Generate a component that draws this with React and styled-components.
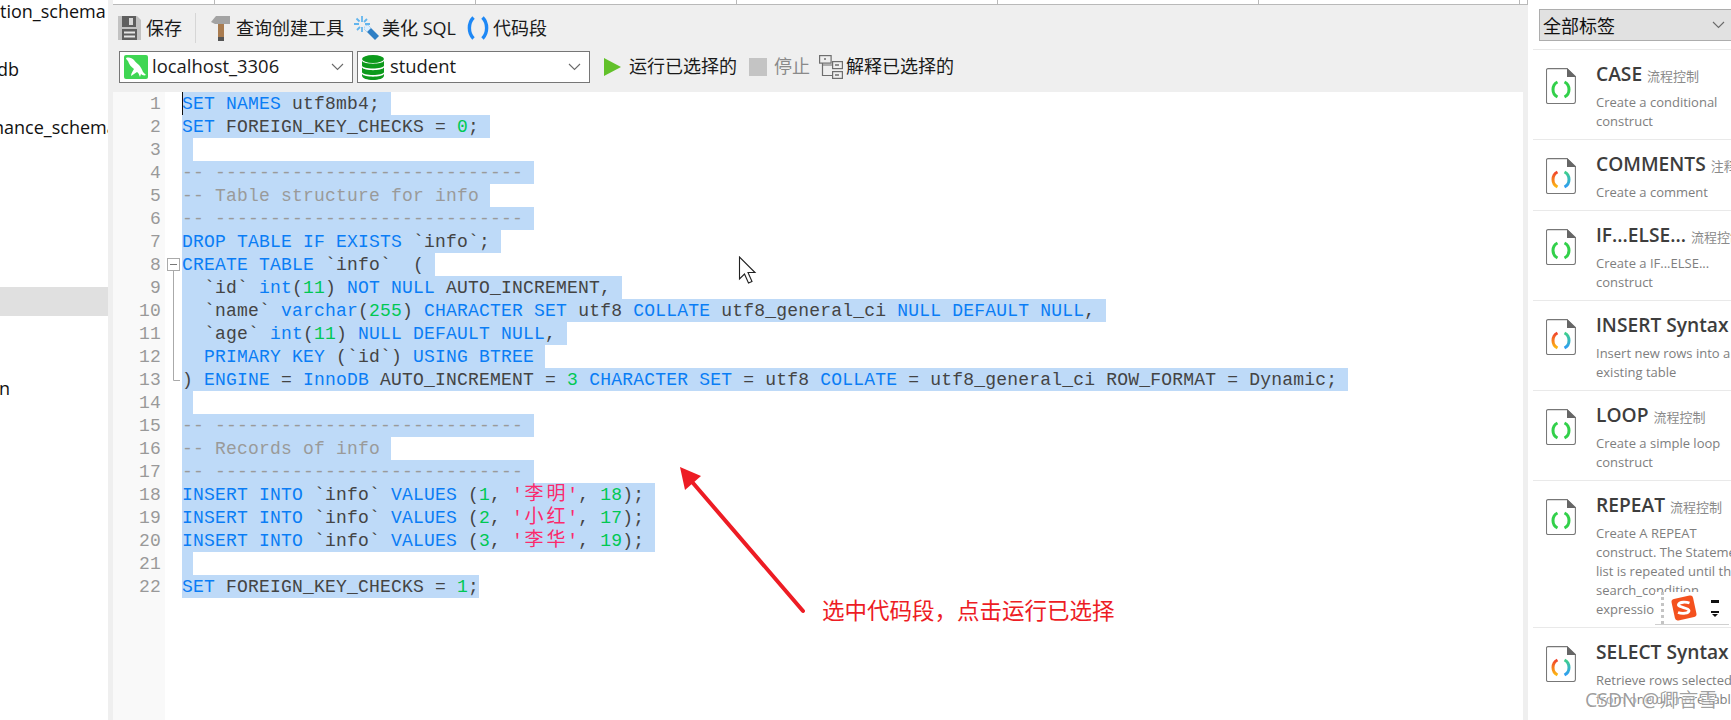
import React from 'react';
import styled, { createGlobalStyle } from 'styled-components';

const GlobalStyle = createGlobalStyle`
  html, body {
    margin: 0;
    padding: 0;
    background: #fff;
    overflow: hidden;
  }
`;

const uiFont = `"Open Sans", "Noto Sans CJK SC", sans-serif`;

const colors = {
  panel: '#efefef',
  selection: '#bedaf8',
  keyword: '#0a7df5',
  number: '#00c853',
  string: '#fb2a6c',
  comment: '#9a9a9a',
  text: '#444',
  red: '#ed1c24',
};

const Page = styled.div`
  position: relative;
  display: flex;
  width: 1731px;
  height: 720px;
  overflow: hidden;
  font-family: ${uiFont};
`;

/* left tree */
const Sidebar = styled.div`
  flex: 0 0 108px;
  overflow: hidden;
  margin-top: -3px;
`;

const TreeRow = styled.div`
  height: 29px;
  line-height: 29px;
  font-size: 18px;
  color: #111;
  white-space: nowrap;
  overflow: hidden;
  text-indent: ${(p) => p.$indent ?? 0}px;
  background: ${(p) => (p.$active ? '#e0e0e0' : 'transparent')};
`;

/* center column */
const Work = styled.div`
  flex: 0 0 1420px;
  display: flex;
  flex-direction: column;
  padding-left: 5px;
  box-sizing: border-box;
  background: ${colors.panel};
`;

const TabBar = styled.div`
  display: flex;
  height: 5px;
  box-sizing: border-box;
  background: #fff;
  border-bottom: 1px solid #b9b9b9;
`;

const Tab = styled.div`
  flex: 0 0 ${(p) => p.$width}px;
  box-sizing: border-box;
  border-right: 1px solid #b9b9b9;
`;

const Toolbar = styled.div`
  display: flex;
  align-items: center;
  height: 46px;
  padding-left: 5px;
`;

const ToolItem = styled.div`
  display: flex;
  align-items: center;
  gap: ${(p) => p.$gap ?? 5}px;
  margin-left: ${(p) => p.$left ?? 0}px;
  font-size: 18px;
  white-space: nowrap;
  color: ${(p) => (p.$muted ? '#8a8a8a' : '#1a1a1a')};
`;

const Label = styled.span`
  margin-top: ${(p) => (p.$row ? -4 : -2)}px;
`;

const Separator = styled.div`
  width: 1px;
  height: 30px;
  margin: 0 15px 0 13px;
  background: #d6d6d6;
`;

const ConnectionRow = styled.div`
  display: flex;
  align-items: center;
  height: 32px;
  padding: 0 0 9px 6px;
`;

const Select = styled.div`
  display: flex;
  align-items: center;
  gap: ${(p) => p.$gap}px;
  width: ${(p) => p.$width}px;
  height: 32px;
  box-sizing: border-box;
  margin-right: 4px;
  padding: 0 8px 0 4px;
  background: #fff;
  border: 1px solid #767676;
  font-size: 18.4px;
  color: #1a1a1a;
`;

const Chevron = styled.svg`
  margin-left: auto;
  flex: none;
`;

const Editor = styled.div`
  flex: 1;
  display: flex;
  margin-right: 5px;
  background: #fff;
  overflow: hidden;
`;

const codeType = `
  font-family: "Liberation Mono", "Noto Sans CJK SC", monospace;
  font-size: 18px;
  letter-spacing: 0.2px;
  line-height: 25px;
  height: 23px;
`;

const Gutter = styled.div`
  flex: 0 0 52px;
  box-sizing: border-box;
  padding-right: 4px;
  background: #f9f9f9;
`;

const LineNumber = styled.div`
  ${codeType}
  text-align: right;
  color: #999;
`;

const FoldMargin = styled.div`
  flex: 0 0 17px;
`;

const Code = styled.div`
  flex: 1;
  position: relative;
  min-width: 0;
`;

const CodeLine = styled.div`
  ${codeType}
  display: block;
  width: fit-content;
  padding-right: ${(p) => (p.$bare ? 0 : 11)}px;
  white-space: pre;
  color: ${colors.text};
  background: ${colors.selection};
`;

const Token = styled.span`
  color: ${(p) => colors[p.$kind] || colors.text};
`;

const Cjk = styled.span`
  display: inline-block;
  width: 22px;
  font-size: 19px;
  letter-spacing: 0;
  text-align: center;
  color: ${colors.string};
`;

const Caret = styled.div`
  position: absolute;
  left: 0;
  top: 0;
  width: 1px;
  height: 23px;
  background: #111;
`;

/* right snippets panel */
const SnippetPanel = styled.div`
  flex: 1;
  display: flex;
  flex-direction: column;
  min-width: 0;
  padding: 9px 0 0 5px;
  background: #fff;
  overflow: hidden;
`;

const TagSelect = styled.div`
  display: flex;
  align-items: center;
  justify-content: space-between;
  flex: none;
  height: 32px;
  box-sizing: border-box;
  margin: 0 -1px 9px 6px;
  padding: 0 6px 0 3px;
  background: #e1e1e1;
  border: 1px solid #adadad;
  font-size: 18px;
  color: #111;
`;

const Card = styled.div`
  display: flex;
  flex: none;
  gap: 20px;
  padding: 10px 0 9px 13px;
  border-top: 1px solid #e9e9e9;
  margin-top: -1px;
  white-space: nowrap;
`;

const FileIcon = styled.svg`
  flex: none;
  margin-top: 8px;
`;

const CardBody = styled.div`
  min-width: 0;
`;

const CardTitle = styled.div`
  display: flex;
  align-items: baseline;
  gap: 5px;
  height: 28px;
  margin-bottom: 5px;
  line-height: 28px;
  font-size: 19.2px;
  font-weight: 600;
  color: #3d3d3d;
`;

const CardTag = styled.span`
  font-size: 13px;
  font-weight: 400;
  color: #8a8a8a;
`;

const CardLine = styled.div`
  height: 19px;
  line-height: 19px;
  font-size: 13px;
  color: #7e7e7e;
`;

/* things lying on top of the screenshot */
const Overlay = styled.svg`
  position: absolute;
  left: ${(p) => p.$x}px;
  top: ${(p) => p.$y}px;
  pointer-events: none;
`;

const Note = styled.div`
  position: absolute;
  left: 822px;
  top: 594px;
  font-size: 22.5px;
  line-height: 34px;
  color: ${colors.red};
  white-space: nowrap;
`;

const ImeBar = styled.div`
  position: absolute;
  left: 1655px;
  top: 592px;
  display: flex;
  align-items: center;
  gap: 12px;
  width: 74px;
  height: 33px;
  box-sizing: border-box;
  padding-left: 15px;
  background: #fff;
  border-bottom: 1px solid #d0d0d0;

  &::before {
    content: '';
    position: absolute;
    left: 6px;
    top: 0;
    bottom: 0;
    border-left: 3px dotted #c4c4c4;
  }
`;

const Watermark = styled.div`
  position: absolute;
  left: 1585px;
  top: 685px;
  font-size: 19.5px;
  line-height: 30px;
  color: rgba(95, 95, 95, 0.62);
  text-shadow: 0 0 2px #fff, 0 0 3px #fff;
  white-space: nowrap;
`;

const ChevronIcon = () => (
  <Chevron width="13" height="8" viewBox="0 0 13 8">
    <path d="M1 1l5.5 5.5L12 1" fill="none" stroke="#6a6a6a" strokeWidth="1.1" />
  </Chevron>
);

const SaveIcon = () => (
  <svg width="23" height="24" viewBox="0 0 23 24">
    <path d="M0 0h19l4 4v20H0z" fill="#c2c2c2" />
    <path d="M4 0h14v11H4z" fill="#5f5f5f" />
    <path d="M11 2h4v7h-4z" fill="#d8d8d8" />
    <path d="M4 13h15v11H4z" fill="#5f5f5f" />
    <path d="M6 15.5h11v2H6zM6 19.5h11v2H6z" fill="#e6e6e6" />
  </svg>
);

const HammerIcon = () => (
  <svg width="19" height="25" viewBox="0 0 19 25">
    <path d="M0 6L5 0h14v8H4z" fill="#a3a3a3" />
    <path d="M7 8h6v14H7z" fill="#a97c50" />
    <path d="M7 21h6v4H7z" fill="#555" />
  </svg>
);

const WandIcon = () => (
  <svg width="25" height="24" viewBox="0 0 25 24">
    <path d="M8 0v6M8 11v5M0 8h5M11 8h5M2.5 2.5l3 3M13 3l-3 3M3 14l3-3" stroke="#62b5ee" strokeWidth="1.8" fill="none" />
    <path d="M11 10l3-1 11 11-4 4L10 13z" fill="#2f7fc4" />
    <path d="M11 10l3-1 3 3-4 4-3-3z" fill="#dcefff" />
  </svg>
);

const BracesIcon = () => (
  <svg width="22" height="24" viewBox="0 0 22 24">
    <path d="M6.5 1.5C1 7 1 17 6.5 22.5M15.5 1.5C21 7 21 17 15.5 22.5" fill="none" stroke="#1e88f5" strokeWidth="3.4" />
  </svg>
);

const MysqlIcon = () => (
  <svg width="24" height="24" viewBox="0 0 24 24">
    <rect width="24" height="24" rx="2" fill="#3fd653" />
    <path d="M2 3c3-1 6 0 8 2 1 2 3 3 5 5 2 2 3 5 4 7l3 3c-2 1-4 0-5-1l-1 3c-1-2-1-4-3-5-2 1-4 3-6 4 0-3 2-5 3-7C7 12 5 9 4 6 3 5 2 4 2 3z" fill="#fff" />
  </svg>
);

const DatabaseIcon = () => (
  <svg width="22" height="25" viewBox="0 0 22 25">
    <ellipse cx="11" cy="4" rx="11" ry="4" fill="#0c9a1b" />
    <path d="M0 6c2 3.500 20 3.500 22 0v4.500c0 4-22 4-22 0zM0 12.500c2 3.500 20 3.500 22 0V17c0 4-22 4-22 0zM0 19c2 3.500 20 3.500 22 0v1.500c0 6-22 6-22 0z" fill="#0c9a1b" />
  </svg>
);

const PlayIcon = () => (
  <svg width="17" height="18" viewBox="0 0 17 18">
    <path d="M0 0l17 9L0 18z" fill="#62c12a" />
  </svg>
);

const StopIcon = () => (
  <svg width="18" height="18" viewBox="0 0 18 18">
    <rect width="18" height="18" fill="#c4c4c4" />
  </svg>
);

const ExplainIcon = () => (
  <svg width="24" height="24" viewBox="0 0 24 24" fill="none" stroke="#6e6e6e" strokeWidth="1.2">
    <rect x="0.6" y="0.6" width="11.5" height="7.5" />
    <rect x="13.6" y="6.6" width="9.8" height="7" />
    <rect x="13.6" y="16.6" width="9.8" height="6.8" />
    <path d="M3.5 8v12.5h10M3.5 10h10" />
    <path d="M5 4h2M16 10h4M16 20h4" stroke="#333" />
  </svg>
);

const FileGlyph = ({ tone }) => (
  <FileIcon width="30" height="36" viewBox="0 0 30 36">
    <defs>
      <linearGradient id="brace-left" x1="0" y1="0" x2="0" y2="1">
        <stop offset="0" stopColor="#f0442c" />
        <stop offset="1" stopColor="#fdb813" />
      </linearGradient>
      <linearGradient id="brace-right" x1="0" y1="0" x2="0" y2="1">
        <stop offset="0" stopColor="#3fd08a" />
        <stop offset="1" stopColor="#2f9df4" />
      </linearGradient>
    </defs>
    <path d="M2 .6h19l8.4 8V33.5a2 2 0 0 1-2 2H2a1.5 1.5 0 0 1-1.5-1.5V2A1.5 1.5 0 0 1 2 .6z" fill="#fff" stroke="#777" strokeWidth="1.1" />
    <path d="M21 0l9 9h-9z" fill="#666" />
    <path d="M11.5 14C5.5 17 5.5 26 11.5 29" fill="none" strokeWidth="3" stroke={tone === 'mixed' ? 'url(#brace-left)' : '#32d04a'} />
    <path d="M18.5 14C24.5 17 24.5 26 18.5 29" fill="none" strokeWidth="3" stroke={tone === 'mixed' ? 'url(#brace-right)' : '#32d04a'} />
  </FileIcon>
);

const k = (text) => ['keyword', text];
const n = (text) => ['number', text];
const c = (text) => ['comment', text];
const s = (text) => ['cjk', text];
const t = (text) => ['text', text];

const rule = [c('-- ----------------------------')];

const insertRow = (id, name, age) => [
  k('INSERT INTO'), t(' `info` '), k('VALUES'), t(' ('), n(id), t(', '),
  ['string', "'"], s(name[0]), s(name[1]), ['string', "'"], t(', '), n(age), t(');'),
];

const sqlLines = [
  [k('SET NAMES'), t(' utf8mb4;')],
  [k('SET'), t(' FOREIGN_KEY_CHECKS = '), n('0'), t(';')],
  [],
  rule,
  [c('-- Table structure for info')],
  rule,
  [k('DROP TABLE IF EXISTS'), t(' `info`;')],
  [k('CREATE TABLE'), t(' `info`  (')],
  [t('  `id` '), k('int'), t('('), n('11'), t(') '), k('NOT NULL'), t(' AUTO_INCREMENT,')],
  [t('  `name` '), k('varchar'), t('('), n('255'), t(') '), k('CHARACTER SET'), t(' utf8 '), k('COLLATE'), t(' utf8_general_ci '), k('NULL DEFAULT NULL'), t(',')],
  [t('  `age` '), k('int'), t('('), n('11'), t(') '), k('NULL DEFAULT NULL'), t(',')],
  [t('  '), k('PRIMARY KEY'), t(' (`id`) '), k('USING BTREE')],
  [t(') '), k('ENGINE'), t(' = '), k('InnoDB'), t(' AUTO_INCREMENT = '), n('3'), t(' '), k('CHARACTER SET'), t(' = utf8 '), k('COLLATE'), t(' = utf8_general_ci ROW_FORMAT = Dynamic;')],
  [],
  rule,
  [c('-- Records of info')],
  rule,
  insertRow('1', '李明', '18'),
  insertRow('2', '小红', '17'),
  insertRow('3', '李华', '19'),
  [],
  [k('SET'), t(' FOREIGN_KEY_CHECKS = '), n('1'), t(';')],
];

const treeRows = [
  { label: 'tion_schema' }, { label: '' }, { label: 'db', indent: -3 }, { label: '' },
  { label: 'nance_schema', indent: -7 }, { label: '' }, { label: '' }, { label: '' }, { label: '' }, { label: '' },
  { label: '', active: true }, { label: '' }, { label: '' }, { label: 'n', indent: -1 },
];

const snippets = [
  { title: 'CASE', tag: '流程控制', tone: 'green', lines: ['Create a conditional', 'construct'] },
  { title: 'COMMENTS', tag: '注释', tone: 'mixed', lines: ['Create a comment'] },
  { title: 'IF...ELSE...', tag: '流程控制', tone: 'green', lines: ['Create a IF...ELSE...', 'construct'] },
  { title: 'INSERT Syntax', tag: '', tone: 'mixed', lines: ['Insert new rows into a', 'existing table'] },
  { title: 'LOOP', tag: '流程控制', tone: 'green', lines: ['Create a simple loop', 'construct'] },
  { title: 'REPEAT', tag: '流程控制', tone: 'green', lines: ['Create A REPEAT', 'construct. The Statement', 'list is repeated until the', 'search_condition', 'expression'] },
  { title: 'SELECT Syntax', tag: '', tone: 'mixed', lines: ['Retrieve rows selected', 'from one or more tables'] },
];

const tabWidths = [102, 261, 261, 261, 261, 261, 8];

export default function App() {
  return (
    <Page>
      <GlobalStyle />

      <Sidebar>
        {treeRows.map((row, i) => (
          <TreeRow key={i} $active={row.active} $indent={row.indent}>{row.label}</TreeRow>
        ))}
      </Sidebar>

      <Work>
        <TabBar>
          {tabWidths.map((width, i) => (
            <Tab key={i} $width={width} />
          ))}
        </TabBar>

        <Toolbar>
          <ToolItem><SaveIcon /><Label>保存</Label></ToolItem>
          <Separator />
          <ToolItem $gap={6}><HammerIcon /><Label>查询创建工具</Label></ToolItem>
          <ToolItem $left={10} $gap={3}><WandIcon /><Label>美化 SQL</Label></ToolItem>
          <ToolItem $left={11} $gap={4}><BracesIcon /><Label>代码段</Label></ToolItem>
        </Toolbar>

        <ConnectionRow>
          <Select $width={234} $gap={4}><MysqlIcon /><Label $row>localhost_3306</Label><ChevronIcon /></Select>
          <Select $width={233} $gap={6}><DatabaseIcon /><Label $row>student</Label><ChevronIcon /></Select>
          <ToolItem $left={10} $gap={8}><PlayIcon /><Label $row>运行已选择的</Label></ToolItem>
          <ToolItem $left={12} $gap={7} $muted><StopIcon /><Label $row>停止</Label></ToolItem>
          <ToolItem $left={9} $gap={3}><ExplainIcon /><Label $row>解释已选择的</Label></ToolItem>
        </ConnectionRow>

        <Editor>
          <Gutter>
            {sqlLines.map((_, i) => (
              <LineNumber key={i}>{i + 1}</LineNumber>
            ))}
          </Gutter>
          <FoldMargin>
            <svg width="17" height="300" viewBox="0 0 17 300">
              <rect x="2.5" y="166.5" width="12" height="12" fill="#fff" stroke="#aaa" />
              <path d="M5 172.5h7" stroke="#777" />
              <path d="M8.5 179v109.5h6.5" fill="none" stroke="#aaa" />
            </svg>
          </FoldMargin>
          <Code>
            <Caret />
            {sqlLines.map((tokens, i) => (
              <CodeLine key={i} $bare={i === sqlLines.length - 1}>
                {tokens.map(([kind, text], j) =>
                  kind === 'cjk'
                    ? <Cjk key={j}>{text}</Cjk>
                    : <Token key={j} $kind={kind}>{text}</Token>
                )}
              </CodeLine>
            ))}
          </Code>
        </Editor>
      </Work>

      <SnippetPanel>
        <TagSelect>全部标签<ChevronIcon /></TagSelect>
        {snippets.map((item) => (
          <Card key={item.title}>
            <FileGlyph tone={item.tone} />
            <CardBody>
              <CardTitle>
                {item.title}
                {item.tag && <CardTag>{item.tag}</CardTag>}
              </CardTitle>
              {item.lines.map((line) => (
                <CardLine key={line}>{line}</CardLine>
              ))}
            </CardBody>
          </Card>
        ))}
      </SnippetPanel>

      <Overlay $x={738} $y={256} width="20" height="29" viewBox="0 0 20 29">
        <path d="M1.5 1v22l5-5 4 9 3.5-1.500-4-9h7z" fill="#fff" stroke="#222" strokeWidth="1.1" />
      </Overlay>

      <Overlay $x={676} $y={463} width="132" height="152" viewBox="0 0 132 152">
        <path d="M127 148L11 13" stroke={colors.red} strokeWidth="4" strokeLinecap="round" fill="none" />
        <path d="M4 4l21 9-16 14z" fill={colors.red} />
      </Overlay>
      <Note>选中代码段，点击运行已选择</Note>

      <ImeBar>
        <svg width="28" height="28" viewBox="0 0 28 28">
          <rect x="3" y="3" width="22" height="22" rx="3" fill="#f4511e" transform="rotate(-12 14 14)" />
          <path d="M19.500 9c-3-1-10-1.500-11 1.500s10 3 10.500 6-7 3.500-11 2" fill="none" stroke="#fff" strokeWidth="2.800" />
        </svg>
        <svg width="10" height="20" viewBox="0 0 10 20">
          <path d="M1 2h8v3H1zM1 13h8v2H1z" fill="#111" />
          <path d="M2 16h6l-3 3z" fill="#111" />
        </svg>
      </ImeBar>

      <Watermark>CSDN @卿言雪</Watermark>
    </Page>
  );
}
